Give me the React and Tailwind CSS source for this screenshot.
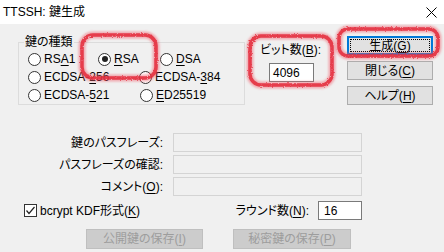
import React from 'react';

const font = { fontFamily: '"Liberation Sans", "Noto Sans CJK JP", sans-serif' };

function U({ children }) {
  return <span className="underline underline-offset-[2px] decoration-1">{children}</span>;
}

function Radio({ checked, children }) {
  return (
    <span className="flex items-center">
      <span className="w-[13px] h-[13px] rounded-full border border-[#333] bg-white flex items-center justify-center shrink-0">
        {checked && <span className="w-[6px] h-[6px] rounded-full bg-[#222]" />}
      </span>
      <span className="ml-[3px]">{children}</span>
    </span>
  );
}

function Btn({ children, w, focus, disabled }) {
  if (disabled) {
    return (
      <div className={`${w} h-[20px] bg-[#cccccc] border border-[#bfbfbf] text-[#9d9d9d] flex items-center justify-center`}>
        {children}
      </div>
    );
  }
  if (focus) {
    return (
      <div className={`${w} h-[19px] bg-[#e1e1e1] border-2 border-[#0078d7] p-[1px]`}>
        <div className="w-full h-full border border-dotted border-black flex items-center justify-center">{children}</div>
      </div>
    );
  }
  return (
    <div className={`${w} h-[19px] bg-[#e1e1e1] border border-[#adadad] flex items-center justify-center`}>
      {children}
    </div>
  );
}

export default function App() {
  return (
    <div className="relative w-[444px] h-[252px] overflow-hidden text-[12px] leading-[14px] text-black [font-feature-settings:'palt']" style={font}>
      {/* title bar */}
      <div className="h-[24px] bg-white flex items-center justify-between pl-[3px] pr-[7px]">
        <span className="text-[12px]">TTSSH: 鍵生成</span>
        <svg width="11" height="11" viewBox="0 0 11 11">
          <path d="M0.5 0.5 L10.5 10.5 M10.5 0.5 L0.5 10.5" stroke="#000" strokeWidth="1" />
        </svg>
      </div>

      <div className="h-[228px] bg-[#f0f0f0] flex flex-col">
        {/* top area */}
        <div className="flex items-start pl-[18px]">
          <fieldset className="mt-[11px] w-[227px] border border-[#dcdcdc] pt-[1px] pb-0">
            <legend className="ml-[5px] px-[1px] leading-[14px]">鍵の種類</legend>
            <div className="flex items-center h-[18px] pl-[9px]">
              <div className="w-[70px]"><Radio>RS<U>A</U>1</Radio></div>
              <div className="w-[62px]"><Radio checked><U>R</U>SA</Radio></div>
              <Radio><U>D</U>SA</Radio>
            </div>
            <div className="flex items-center h-[18px] pl-[9px]">
              <div className="w-[111px]"><Radio>ECDSA-<U>2</U>56</Radio></div>
              <Radio>ECDSA-<U>3</U>84</Radio>
            </div>
            <div className="flex items-center h-[18px] pl-[9px]">
              <div className="w-[112px]"><Radio>ECDSA-<U>5</U>21</Radio></div>
              <Radio><U>E</U>D25519</Radio>
            </div>
          </fieldset>

          <div className="ml-[15px] mt-[19px] w-[58px] flex flex-col">
            <span className="whitespace-nowrap">ビット数(<U>B</U>):</span>
            <div className="mt-[6px] ml-[9px] w-[45px] h-[19px] bg-white border border-[#7a7a7a] flex items-center pl-[3px]">4096</div>
          </div>

          <div className="ml-[29px] mt-[12px] flex flex-col gap-[6px]">
            <Btn w="w-[86px]" focus>生成(<U>G</U>)</Btn>
            <Btn w="w-[86px]">閉じる(<U>C</U>)</Btn>
            <Btn w="w-[86px]">ヘルプ(<U>H</U>)</Btn>
          </div>
        </div>

        {/* passphrase rows */}
        <div className="mt-[28px] flex flex-col gap-[3px]">
          {[
            <>鍵のパスフレーズ:</>,
            <>パスフレーズの確認:</>,
            <>コメント(<U>O</U>):</>,
          ].map((label, i) => (
            <div key={i} className="flex items-center h-[19px]">
              <span className="w-[163px] text-right whitespace-nowrap">{label}</span>
              <div className="ml-[10px] w-[189px] h-[19px] border border-[#d4d4d4] bg-[#f0f0f0]" />
            </div>
          ))}
        </div>

        {/* checkbox + rounds */}
        <div className="mt-[5px] h-[19px] w-[362px] flex items-center pl-[24px]">
          <span className="w-[13px] h-[13px] border border-[#333] bg-white flex items-center justify-center">
            <svg width="11" height="11" viewBox="0 0 11 11">
              <path d="M1.5 5.5 L4 8.5 L9.5 2" stroke="#222" strokeWidth="1.2" fill="none" />
            </svg>
          </span>
          <span className="ml-[3px]">bcrypt KDF形式(<U>K</U>)</span>
          <span className="ml-auto">ラウンド数(<U>N</U>):</span>
          <div className="ml-[9px] w-[44px] h-[19px] bg-white border border-[#7a7a7a] flex items-center pl-[5px]">16</div>
        </div>

        {/* save buttons */}
        <div className="mt-[9px] flex pl-[86px]">
          <Btn w="w-[117px]" disabled>公開鍵の保存(<U>I</U>)</Btn>
          <div className="ml-[30px]">
            <Btn w="w-[118px]" disabled>秘密鍵の保存(<U>P</U>)</Btn>
          </div>
        </div>
      </div>

      {/* red hand-drawn annotations */}
      <svg className="absolute inset-0 pointer-events-none" width="444" height="252" viewBox="0 0 444 252">
        <defs>
          <filter id="rough" x="-10%" y="-10%" width="120%" height="120%">
            <feTurbulence type="fractalNoise" baseFrequency="0.8" numOctaves="2" result="n" />
            <feDisplacementMap in="SourceGraphic" in2="n" scale="3" />
          </filter>
          <filter id="halo" x="-10%" y="-10%" width="120%" height="120%">
            <feGaussianBlur stdDeviation="1.2" />
          </filter>
        </defs>
        <g filter="url(#halo)" fill="none" stroke="#f0606c" strokeOpacity="0.5" strokeWidth="7">
          <rect x="82" y="35" width="74" height="43" rx="11" />
          <rect x="250" y="36" width="82" height="49" rx="11" />
          <rect x="339" y="29" width="99" height="27" rx="9" />
        </g>
        <g filter="url(#rough)" fill="none" stroke="#e4283a" strokeOpacity="0.85" strokeWidth="3.5">
          <rect x="82" y="35" width="74" height="43" rx="11" />
          <rect x="250" y="36" width="82" height="49" rx="11" />
          <rect x="339" y="29" width="99" height="27" rx="9" />
        </g>
      </svg>
    </div>
  );
}
